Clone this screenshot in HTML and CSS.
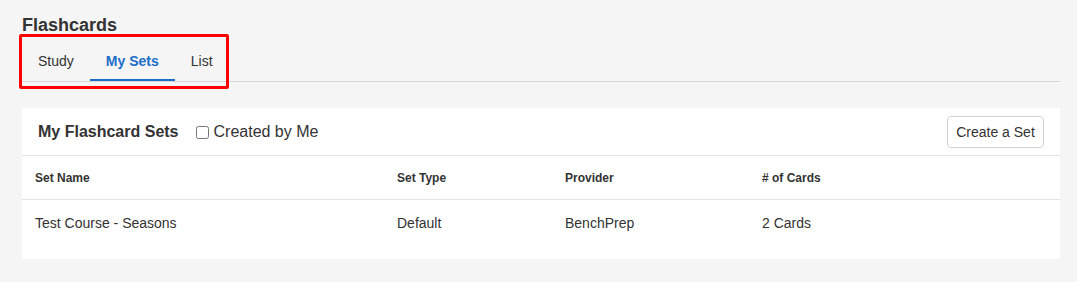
FILE: index.html
```html
<!DOCTYPE html>
<html>
<head>
<meta charset="utf-8">
<link rel="stylesheet" href="styles.css">
</head>
<body>
<div class="page">
  <h1 class="title">Flashcards</h1>
  <div class="tabs-wrap">
    <nav class="tabs">
      <a class="tab">Study</a>
      <a class="tab active">My Sets</a>
      <a class="tab">List</a>
    </nav>
    <div class="highlight"></div>
  </div>
  <section class="card">
    <div class="card-header">
      <h2 class="card-title">My Flashcard Sets</h2>
      <label class="filter"><input type="checkbox" class="check"><span>Created by Me</span></label>
      <button class="btn">Create a Set</button>
    </div>
    <table class="sets">
      <colgroup>
        <col class="col-name"><col class="col-type"><col class="col-provider"><col class="col-count">
      </colgroup>
      <thead>
        <tr><th>Set Name</th><th>Set Type</th><th>Provider</th><th># of Cards</th></tr>
      </thead>
      <tbody>
        <tr><td>Test Course - Seasons</td><td>Default</td><td>BenchPrep</td><td>2 Cards</td></tr>
      </tbody>
    </table>
  </section>
</div>
</body>
</html>
```
FILE: styles.css
```css
html, body {
  margin: 0;
  padding: 0;
  background: #f5f5f5;
  font-family: "Liberation Sans", Arial, sans-serif;
  color: #333;
}
.page {
  padding: 14px 17px 0 22px;
}
.title {
  margin: 0;
  font-size: 18px;
  line-height: 22px;
  font-weight: bold;
  color: #333;
}
.tabs-wrap {
  position: relative;
}
.tabs {
  display: flex;
  border-bottom: 1px solid #d6d6d6;
}
.tab {
  font-size: 14px;
  line-height: 20px;
  padding: 15px 16px 8px;
  border-bottom: 2px solid transparent;
  color: #333;
}
.tab.active {
  font-weight: bold;
  color: #1a6dc8;
  border-bottom-color: #1a6dc8;
}
.highlight {
  position: absolute;
  left: -3px;
  top: -2px;
  width: 204px;
  height: 49px;
  border: 3px solid #ff0000;
  border-radius: 2px;
  pointer-events: none;
}
.card {
  margin-top: 26px;
  background: #fff;
  padding-bottom: 13px;
}
.card-header {
  display: flex;
  align-items: center;
  padding: 8px 16px 7px;
  border-bottom: 1px solid #e3e3e3;
}
.card-title {
  margin: 0;
  font-size: 16px;
  font-weight: bold;
  color: #333;
}
.filter {
  display: flex;
  align-items: center;
  margin-left: 17px;
  font-size: 16px;
  color: #333;
}
.check {
  width: 13px;
  height: 13px;
  margin: 0 5px 0 0;
}
.btn {
  margin-left: auto;
  height: 32px;
  width: 97px;
  padding: 0;
  background: #fff;
  border: 1px solid #d4d4d4;
  border-radius: 4px;
  font-family: "Liberation Sans", Arial, sans-serif;
  font-size: 14px;
  color: #333;
}
.sets {
  width: 100%;
  border-collapse: collapse;
  table-layout: fixed;
}
.col-name { width: 362px; }
.col-type { width: 168px; }
.col-provider { width: 197px; }
.sets th {
  text-align: left;
  font-size: 12px;
  line-height: 18px;
  font-weight: bold;
  padding: 13px 13px 12px;
  border-bottom: 1px solid #e3e3e3;
  color: #333;
}
.sets td {
  font-size: 14px;
  line-height: 20px;
  padding: 13px 13px;
  color: #333;
}
```
